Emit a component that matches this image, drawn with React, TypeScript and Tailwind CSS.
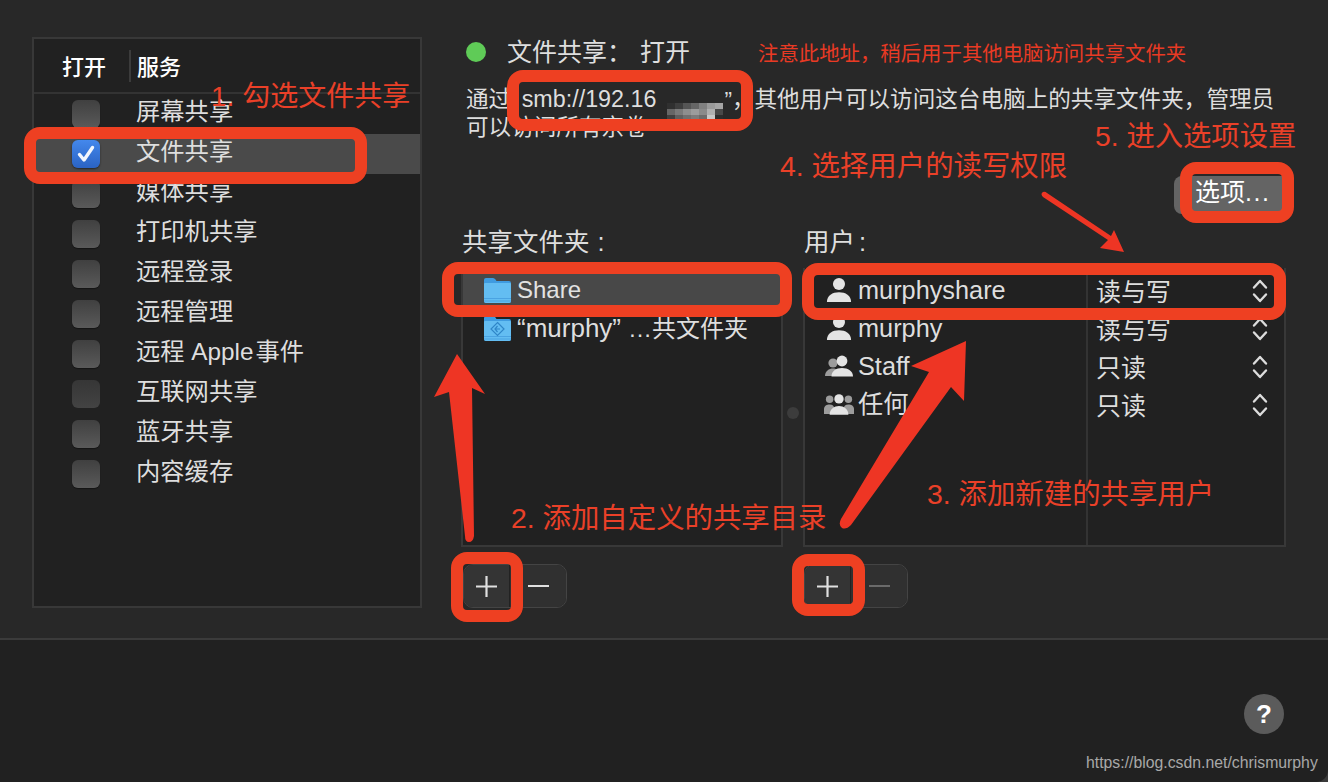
import React from "react";

const cjk = "font-['Liberation_Sans','Noto_Sans_CJK_SC',sans-serif]";

const services = [
  { name: "屏幕共享" },
  { name: "文件共享", on: true },
  { name: "媒体共享" },
  { name: "打印机共享" },
  { name: "远程登录" },
  { name: "远程管理" },
  { name: "远程 Apple\u200a事件" },
  { name: "互联网共享", off: true },
  { name: "蓝牙共享" },
  { name: "内容缓存" },
];

function Check({ on, off }: { on?: boolean; off?: boolean }) {
  if (on)
    return (
      <div className="w-[28px] h-[28px] rounded-[6px] bg-gradient-to-b from-[#4488ec] to-[#2a63c4] flex items-center justify-center shadow-[0_1px_2px_rgba(0,0,0,0.5)]">
        <svg width="22" height="22" viewBox="0 0 22 22" fill="none">
          <path d="M4.500 11.500 L9 17 L17.500 4.500" stroke="#f2f6fd" strokeWidth="3.400" strokeLinecap="round" strokeLinejoin="round" />
        </svg>
      </div>
    );
  return (
    <div
      className={
        off
          ? "w-[28px] h-[28px] rounded-[6px] bg-gradient-to-b from-[#363636] to-[#434343]"
          : "w-[28px] h-[28px] rounded-[6px] bg-gradient-to-b from-[#404040] to-[#5a5a5a] shadow-[0_1px_1px_rgba(0,0,0,0.4)]"
      }
    />
  );
}

function Person() {
  return (
    <svg width="26" height="26" viewBox="0 0 28 28" fill="#e4e4e4">
      <circle cx="14" cy="7.500" r="6.500" />
      <path d="M1 27 C1 20 7 16.500 14 16.500 C21 16.500 27 20 27 27 Z" />
    </svg>
  );
}

function Group() {
  return (
    <svg width="30" height="24" viewBox="0 0 30 24">
      <circle cx="9" cy="9" r="4.600" fill="#9c9c9c" />
      <path d="M1 22 C1 17 5 14.500 9 14.500 C13 14.500 15 17 15 22 Z" fill="#9c9c9c" />
      <circle cx="18" cy="7" r="5.400" fill="#e4e4e4" />
      <path d="M7.500 22.500 C7.500 17 12 14 18 14 C24 14 29 17 29 22.500 Z" fill="#e4e4e4" />
    </svg>
  );
}

function Everyone() {
  return (
    <svg width="30" height="23" viewBox="0 0 32 24">
      <circle cx="6" cy="6.500" r="4" fill="#9c9c9c" />
      <circle cx="26" cy="6.500" r="4" fill="#9c9c9c" />
      <path d="M0 22 V17 C0 13.500 3 12 6 12 C9 12 11 13.500 11 17 V22 Z" fill="#9c9c9c" />
      <path d="M21 22 V17 C21 13.500 23 12 26 12 C29 12 32 13.500 32 17 V22 Z" fill="#9c9c9c" />
      <circle cx="16" cy="6" r="5" fill="#e4e4e4" />
      <path d="M6 23 C6 16.500 11 13.500 16 13.500 C21 13.500 26 16.500 26 23 Z" fill="#e4e4e4" />
    </svg>
  );
}

function Folder({ shared }: { shared?: boolean }) {
  return (
    <svg width="27" height="25" viewBox="0 0 27 25">
      <path d="M0 2 Q0 0 2 0 H9 Q10.500 0 11.500 1.500 L12.500 3 H25 Q27 3 27 5 V23 Q27 25 25 25 H2 Q0 25 0 23 Z" fill="#3f9be0" />
      <path d="M0 6 Q0 5 1 5 H26 Q27 5 27 6 V23 Q27 25 25 25 H2 Q0 25 0 23 Z" fill="#63bdf2" />
      <rect x="0" y="20" width="27" height="1" fill="#4aa3e2" />
      <rect x="0" y="22.500" width="27" height="1" fill="#4aa3e2" />
      {shared && (
        <g fill="none" stroke="#2f86c8" strokeWidth="1.200">
          <path d="M13.500 6.500 L20 13 L13.500 19.500 L7 13 Z" />
          <path d="M13.500 10 L11 13 L13.500 16 M11 13 H16" />
        </g>
      )}
    </svg>
  );
}

function Stepper() {
  return (
    <svg width="16" height="24" viewBox="0 0 16 24" fill="none" stroke="#dcdcdc" strokeWidth="2.400" strokeLinecap="round" strokeLinejoin="round">
      <path d="M2 8.500 L8 2 L14 8.500" />
      <path d="M2 15.500 L8 22 L14 15.500" />
    </svg>
  );
}

function SegButtons({ dim }: { dim?: boolean }) {
  return (
    <div className="flex w-[104px] h-[44px] rounded-[10px] border border-[#444444] overflow-hidden">
      <div className="w-[46px] bg-[#343434] border-r border-[#222222] flex items-center justify-center">
        <svg width="21" height="21" viewBox="0 0 21 21" stroke="#e0e0e0" strokeWidth="2.200">
          <path d="M10.500 0 V21 M0 10.500 H21" />
        </svg>
      </div>
      <div className="flex-1 bg-[#303030] flex items-center justify-center">
        <svg width="21" height="4" viewBox="0 0 21 4" stroke={dim ? "#6a6a6a" : "#e0e0e0"} strokeWidth="2.200">
          <path d="M0 2 H21" />
        </svg>
      </div>
    </div>
  );
}

const blurRows = [
  ["bg-[#303030]", "bg-[#3e3e3e]", "bg-[#555555]", "bg-[#666666]", "bg-[#808080]", "bg-[#9a9a9a]", "bg-[#a5a5a5]"],
  ["bg-[#666666]", "bg-[#7a7a7a]", "bg-[#8e8e8e]", "bg-[#9c9c9c]", "bg-[#8a8a8a]", "bg-[#b0b0b0]", "bg-[#484848]"],
  ["bg-[#404040]", "bg-[#606060]", "bg-[#707070]", "bg-[#7c7c7c]", "bg-[#6c6c6c]", "bg-[#c8c8c8]", "bg-[#2c2c2c]"],
];

function Blurred() {
  return (
    <span className="inline-flex flex-col w-[56px] h-[18px] align-[-2px] ml-[11px] mr-[1px] blur-[0.5px]">
      {blurRows.map((r, i) => (
        <span key={i} className="flex h-[6px]">
          {r.map((c, j) => (
            <span key={j} className={`w-[8px] h-[6px] ${c}`} />
          ))}
        </span>
      ))}
    </span>
  );
}

const boxes = [
  "left-[24px] top-[127px] w-[343px] h-[57px]",
  "left-[507px] top-[70px] w-[246px] h-[61px]",
  "left-[1180px] top-[162px] w-[114px] h-[61px]",
  "left-[802px] top-[263px] w-[484px] h-[57px]",
  "left-[442px] top-[262px] w-[350px] h-[55px]",
  "left-[451px] top-[552px] w-[72px] h-[70px]",
  "left-[792px] top-[554px] w-[73px] h-[62px]",
];

const notes = [
  { t: "1. 勾选文件共享", c: "left-[211px] top-[77px] text-[28px]" },
  { t: "5. 进入选项设置", c: "left-[1095px] top-[116px] text-[28.300px]" },
  { t: "4. 选择用户的读写权限", c: "left-[780px] top-[146px] text-[28.400px]" },
  { t: "2. 添加自定义的共享目录", c: "left-[511px] top-[498px] text-[28.400px]" },
  { t: "3. 添加新建的共享用户", c: "left-[927px] top-[474px] text-[28.400px]" },
];

export default function App() {
  return (
    <div className="w-[1328px] h-[782px] bg-[#3a3a3a]">
      <div className={`relative w-[1328px] h-[782px] bg-[#212121] rounded-br-[12px] overflow-hidden ${cjk}`}>
        {/* main pane */}
        <div className="h-[640px] bg-[#282828] border-b-2 border-[#3b3b3b] flex pt-[37px] pl-[32px]">
          {/* services */}
          <div className="w-[390px] h-[571px] bg-[#212121] border-2 border-[#383838]">
            <div className="h-[55px] border-b-2 border-[#333333] flex items-center text-white text-[22px] font-medium">
              <div className="w-[95px] pl-[28px] pt-[3px]">打开</div>
              <div className="h-[32px] border-l-2 border-[#3c3c3c] pl-[6px] leading-[36px]">服务</div>
            </div>
            {services.map((s) => (
              <div key={s.name} className={s.on ? "h-[40px] flex items-center bg-[#4a4a4a]" : "h-[40px] flex items-center"}>
                <div className="w-[102px] pl-[38px]">
                  <Check on={s.on} off={s.off} />
                </div>
                <span className="text-[24.300px] text-[#dedede] pb-[3px]">{s.name}</span>
              </div>
            ))}
          </div>

          {/* right column */}
          <div className="ml-[39px] w-[825px] flex flex-col">
            <div className="h-[30px] flex items-center pl-[5px]">
              <div className="w-[20px] h-[20px] rounded-full bg-[#5fcb57]" />
              <span className="ml-[21px] text-[25px] text-[#dedede] pt-[1px]">
                文件共享<span className="mr-[8px]">{"\uff1a"}</span>打开
              </span>
            </div>
            <div className="mt-[17px] pl-[5px] text-[22.600px] leading-[28px] text-[#dedede] whitespace-nowrap">
              <div className="h-[28px] pt-[1px]">
                通过“<span className="ml-[3px] text-[23.300px]">smb://192.16</span>
                <Blurred />”{"\uff0c"}其他用户可以访问这台电脑上的共享文件夹{"\uff0c"}管理员
              </div>
              <div className="h-[28px] pt-[2px]">可以访问所有宗卷</div>
            </div>
            <div className="mt-[36px] flex justify-end pr-[4px]">
              <div className="w-[108px] h-[38px] bg-[#646464] rounded-l-[8px] flex items-center pl-[21px] pb-[4px] text-[25px] text-white">
                选项<span className="tracking-[1.500px]">...</span>
              </div>
            </div>
            <div className="mt-[14px] flex text-[25.500px] text-[#dedede] h-[28px] leading-[28px]">
              <div className="w-[342px] pl-[1px]">
                共享文件夹<span className="ml-[8px]">:</span>
              </div>
              <div className="pl-[1px]">
                用户<span className="ml-[4px]">:</span>
              </div>
            </div>
            <div className="mt-[12px] flex h-[279px]">
              <div className="w-[322px] bg-[#212121] border-2 border-t-0 border-[#383838] pt-[3px]">
                <div className="h-[38px] flex items-center bg-[#484848] pl-[21px]">
                  <Folder />
                  <span className="ml-[6px] text-[24px] text-[#e2e2e2]">Share</span>
                </div>
                <div className="h-[38px] flex items-center pl-[21px]">
                  <Folder shared />
                  <span className="ml-[6px] text-[24px] text-[#dedede] whitespace-nowrap">
                    <span className="text-[26px]">“murphy”</span>
                    <span className="ml-[7px]">…</span>共文件夹
                  </span>
                </div>
              </div>
              <div className="w-[20px] flex items-center justify-center pt-[11px]">
                <div className="w-[12px] h-[12px] rounded-full bg-[#3c3c3c]" />
              </div>
              <div className="w-[483px] bg-[#212121] border-2 border-t-0 border-[#383838] flex text-[25px] text-[#dedede]">
                <div className="w-[283px] border-r-2 border-[#333333] pt-[3px]">
                  {[
                    { n: "murphyshare", i: <Person /> },
                    { n: "murphy", i: <Person /> },
                    { n: "Staff", i: <Group /> },
                    { n: "任何", i: <Everyone /> },
                  ].map((r) => (
                    <div key={r.n} className="h-[38px] flex items-center pl-[19px]">
                      <div className="w-[30px] mr-[4px] flex justify-center">{r.i}</div>
                      <span className="text-[25.300px] leading-[30px]">{r.n}</span>
                    </div>
                  ))}
                </div>
                <div className="flex-1 pt-[4px]">
                  {["读与写", "读与写", "只读", "只读"].map((p, i) => (
                    <div key={i} className="h-[38px] flex items-center pl-[8px] pr-[16px] justify-between">
                      <span className="pt-[3px]">{p}</span>
                      <Stepper />
                    </div>
                  ))}
                </div>
              </div>
            </div>
            <div className="mt-[17px] flex">
              <div className="w-[342px] pl-[2px]">
                <SegButtons />
              </div>
              <div className="pl-[1px]">
                <SegButtons dim />
              </div>
            </div>
          </div>
        </div>

        {/* footer */}
        <div className="h-[142px] flex justify-end pt-[54px] pr-[44px]">
          <div className="w-[40px] h-[40px] rounded-full bg-[#5b5b5b] flex items-center justify-center text-white text-[26px] font-bold">?</div>
        </div>
        <div className="absolute left-[1086px] top-[753px] text-[15.800px] leading-[20px] text-[#a8a8a8] font-['Liberation_Sans',sans-serif] whitespace-nowrap">
          https://blog.csdn.net/chrismurphy
        </div>

        {/* screenshot annotations lying over the window */}
        {boxes.map((b) => (
          <div key={b} className={`absolute ${b} border-[12px] border-[#ee4022] rounded-[16px]`} />
        ))}
        <svg className="absolute left-0 top-0 pointer-events-none" width="1328" height="782" viewBox="0 0 1328 782" fill="#ee3524">
          <path d="M457 354 L485 394 L472 388 L474 536 Q473 542 469 542 Q465 542 465 536 L449 392 L434 397 Z" />
          <path d="M966 341 L964 401 L951 387 L851 525 Q846 530 842 528 Q838 525 841 519 L929 372 L911 366 Z" />
          <path d="M1124 252 L1100 248 L1108 240 L1043 197 Q1040 194 1043 192 Q1045 191 1047 193 L1111 236 L1114 230 Z" />
        </svg>
        {notes.map((n) => (
          <div key={n.t} className={`absolute ${n.c} leading-[40px] text-[#ea4028] whitespace-nowrap`}>
            {n.t}
          </div>
        ))}
        <div className="absolute left-[758px] top-[41px] text-[20.400px] leading-[26px] text-[#e93a24] whitespace-nowrap">
          注意此地址{"\uff0c"}稍后用于其他电脑访问共享文件夹
        </div>
      </div>
    </div>
  );
}
